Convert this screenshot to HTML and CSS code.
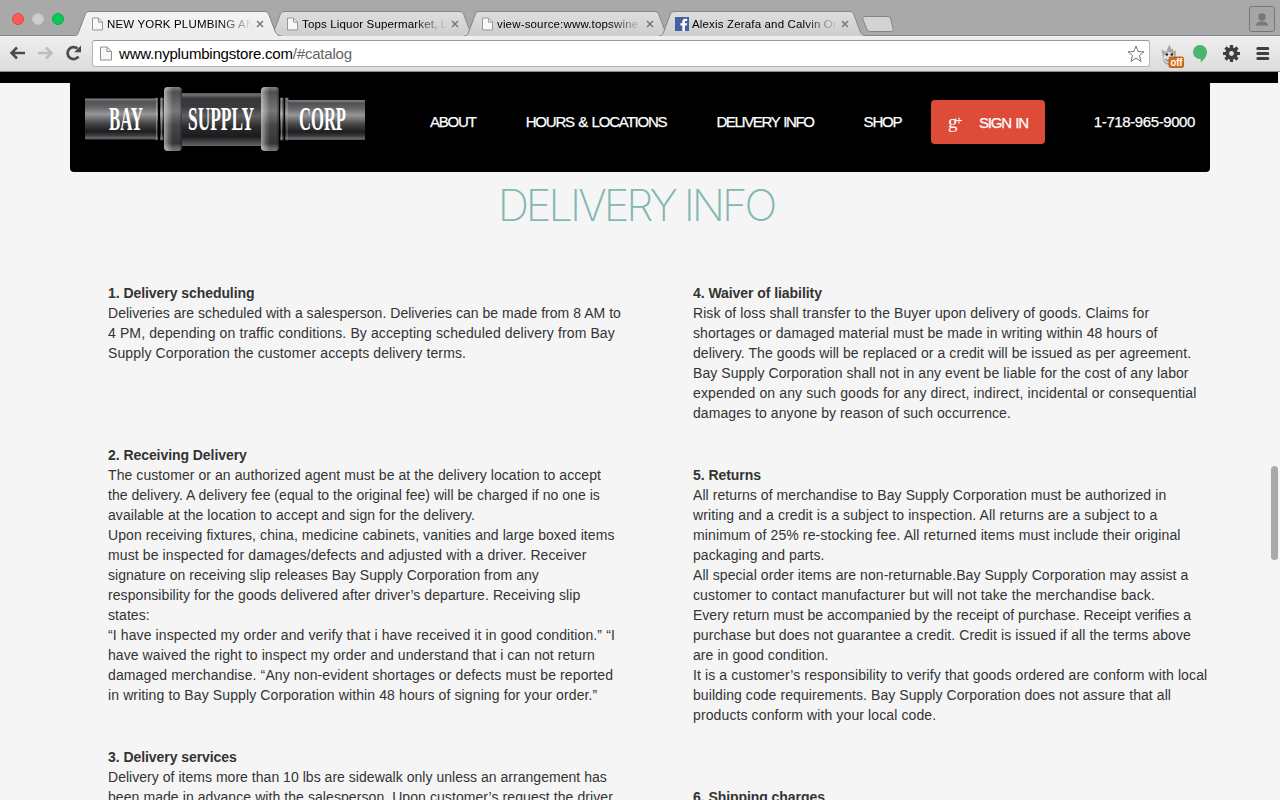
FILE: index.html
```html
<!DOCTYPE html>
<html lang="en">
<head>
<meta charset="utf-8">
<title>NEW YORK PLUMBING AND SUPPLY</title>
<link rel="stylesheet" href="styles.css">
</head>
<body>
<svg width="0" height="0" class="defs" aria-hidden="true">
  <defs>
    <linearGradient id="tabOn" x1="0" y1="0" x2="0" y2="1"><stop offset="0" stop-color="#f4f4f4"/><stop offset="1" stop-color="#ececec"/></linearGradient>
    <linearGradient id="tabOff" x1="0" y1="0" x2="0" y2="1"><stop offset="0" stop-color="#dedede"/><stop offset="1" stop-color="#cecece"/></linearGradient>
    <linearGradient id="pipe" x1="0" y1="0" x2="0" y2="1"><stop offset="0" stop-color="#858587"/><stop offset=".08" stop-color="#505052"/><stop offset=".22" stop-color="#666668"/><stop offset=".38" stop-color="#98989a"/><stop offset=".6" stop-color="#48484a"/><stop offset=".8" stop-color="#1d1d1f"/><stop offset=".9" stop-color="#3b3b3d"/><stop offset=".96" stop-color="#68686a"/><stop offset="1" stop-color="#4b4b4d"/></linearGradient>
    <linearGradient id="body" x1="0" y1="0" x2="0" y2="1"><stop offset="0" stop-color="#5c5c5e"/><stop offset=".04" stop-color="#6c6c6e"/><stop offset=".1" stop-color="#38383a"/><stop offset=".25" stop-color="#39393b"/><stop offset=".43" stop-color="#606062"/><stop offset=".65" stop-color="#29292b"/><stop offset=".82" stop-color="#1b1b1d"/><stop offset=".93" stop-color="#48484a"/><stop offset="1" stop-color="#68686a"/></linearGradient>
    <linearGradient id="ring" x1="0" y1="0" x2="0" y2="1"><stop offset="0" stop-color="#8f8f91"/><stop offset=".08" stop-color="#59595b"/><stop offset=".38" stop-color="#858587"/><stop offset=".6" stop-color="#4f4f51"/><stop offset=".88" stop-color="#3c3c3e"/><stop offset=".95" stop-color="#717173"/><stop offset="1" stop-color="#858587"/></linearGradient>
    <linearGradient id="shine" x1="0" y1="0" x2="1" y2="0"><stop offset="0" stop-color="#fff" stop-opacity=".5"/><stop offset=".3" stop-color="#fff" stop-opacity=".12"/><stop offset=".5" stop-color="#000" stop-opacity=".12"/><stop offset=".85" stop-color="#000" stop-opacity=".1"/><stop offset="1" stop-color="#000" stop-opacity=".5"/></linearGradient>
    <symbol id="page" viewBox="0 0 12 14"><path d="M.5.5h6.600l4.400 4.400v8.600H.5z" fill="#f7f7f7" stroke="#8e8e8e"/><path d="M7 .8V5h4.200" fill="none" stroke="#8e8e8e"/></symbol>
    <symbol id="close" viewBox="0 0 8 8"><path d="M1 1l6 6M7 1L1 7" stroke="#777" stroke-width="1.500"/></symbol>
    <symbol id="tab" viewBox="0 0 209 25"><path d="M0 25C4 24.500 4 22.500 5 20L11 4C12 1.500 13 .5 16 .5H190C193 .5 194 1.500 195 4L201 20C202 22.500 203 24.500 208 25" stroke="#858585"/></symbol>
  </defs>
</svg>

<header class="browser">
  <div class="tabstrip">
    <div class="lights"><i class="red"></i><i class="idle"></i><i class="green"></i></div>
    <div class="tabs">
      <div class="tab active"><svg class="shape"><use href="#tab"/></svg><svg class="favicon"><use href="#page"/></svg><span class="title">NEW YORK PLUMBING AN</span><svg class="close"><use href="#close"/></svg></div>
      <div class="tab"><svg class="shape"><use href="#tab"/></svg><svg class="favicon"><use href="#page"/></svg><span class="title">Tops Liquor Supermarket, L</span><svg class="close"><use href="#close"/></svg></div>
      <div class="tab"><svg class="shape"><use href="#tab"/></svg><svg class="favicon"><use href="#page"/></svg><span class="title">view-source:www.topswine</span><svg class="close"><use href="#close"/></svg></div>
      <div class="tab facebook"><svg class="shape"><use href="#tab"/></svg><svg class="favicon" viewBox="0 0 14 14"><path fill="#4460a0" d="M0 0h14v14H0z"/><path d="M7.300 14V8.500H5.400V6.200h1.900V4.700c0-2 1.100-3 3-3h1.900V4H11c-.9 0-1.100.4-1.100 1.100v1.100h2.200l-.3 2.300H9.900V14z" fill="#fff"/></svg><span class="title">Alexis Zerafa and Calvin Or</span><svg class="close"><use href="#close"/></svg></div>
    </div>
    <svg class="newtab" viewBox="0 0 32 16"><path d="M3 .5H25C27 .5 28 1.200 28.700 3L31 12.500C31.600 14.500 31 15.500 29 15.500H8.500C6.500 15.500 5.500 14.500 4.800 13L.8 3.200C.2 1.500 1 .5 3 .5Z" fill="#d3d3d3" stroke="#858585"/></svg>
    <svg class="profile" viewBox="0 0 26 26"><rect x=".5" y=".5" width="25" height="25" rx="2" fill="#a6a6a6" stroke="#767676"/><circle cx="13" cy="11" r="3.700" fill="#777"/><path d="M7 19.500c0-3 2.500-4 6-4s6 1 6 4z" fill="#777"/></svg>
  </div>
  <div class="toolbar">
    <svg class="nav-icons" viewBox="0 0 76 20"><path d="M18 10H4.500M10 4.500L4.500 10l5.500 5.500" fill="none" stroke="#4b4b4b" stroke-width="2.500"/><path d="M31 10h13.500M39 4.500l5.500 5.500-5.500 5.500" fill="none" stroke="#bdbdbd" stroke-width="2.500"/><path d="M71.500 13.500A6 6 0 1 1 70.500 5.500" fill="none" stroke="#4b4b4b" stroke-width="2.700"/><path d="M74 2.500v6.800h-6.800z" fill="#4b4b4b"/></svg>
    <div class="omnibox">
      <svg class="pageicon"><use href="#page"/></svg>
      <span class="url">www.nyplumbingstore.com<span class="path">/#catalog</span></span>
      <svg class="star" viewBox="0 0 18 18"><path d="M9 1l2.100 5.500 5.900.3-4.600 3.700 1.600 5.900L9 13.100 4 16.400l1.600-5.900L1 6.800l5.900-.3z" fill="#fff" stroke="#777" stroke-linejoin="round"/></svg>
    </div>
    <svg class="extensions" viewBox="0 0 114 26">
      <path d="M2 14L.5 5.500 5 8 8.500.5l2 5 1.500-1 .3 3L15 6.500 14.500 14c0 5-3 7-6 7s-6.500-2-6.500-7z" fill="#a5a5a5"/><ellipse cx="8" cy="13.500" rx="5.500" ry="5.500" fill="#ddd"/><circle cx="5.800" cy="10.500" r="1.300" fill="#222"/><circle cx="10.800" cy="10.500" r="1.300" fill="#222"/><path d="M4.500 15c1.500 2.500 5 2.500 7 0" fill="none" stroke="#555"/>
      <rect x="8" y="13" width="14.500" height="10.500" rx="1.500" fill="#d96b15" stroke="#a94c08" stroke-width=".7"/><text x="9.500" y="22" class="off" textLength="12" lengthAdjust="spacingAndGlyphs">off</text>
      <path d="M39 1a7 7 0 0 1 7 7c0 4.500-3 7.500-6.300 10.500V15H39a7 7 0 0 1 0-14z" fill="#49b66c"/>
      <g transform="translate(70.500 9.500)"><circle r="4.300" fill="none" stroke="#3f3f3f" stroke-width="3.800"/><path d="M0-8.500V-5M0 8.500V5M-8.500 0H-5M8.500 0H5M-6-6l2.500 2.500M6 6L3.500 3.500M-6 6l2.500-2.500M6-6L3.500-3.500" stroke="#3f3f3f" stroke-width="3.200"/></g>
      <path d="M96.800 4.500h10M96.800 9.500h10M96.800 14.500h10" stroke="#3f3f3f" stroke-width="3" stroke-linecap="round"/>
    </svg>
  </div>
</header>

<main class="site">
  <div class="blackstrip"></div>
  <nav class="navbar">
    <svg class="logo" viewBox="0 0 280 66">
      <rect y="12.500" width="71" height="41" fill="url(#pipe)"/><rect x="203" y="14" width="77" height="40" fill="url(#pipe)"/>
      <g fill="url(#pipe)"><rect x="70" y="11.500" width="3" height="43" rx="1.500"/><rect x="75" y="11.500" width="3.500" height="43" rx="1.500"/><rect x="195" y="11.500" width="3.500" height="43" rx="1.500"/><rect x="200" y="11.500" width="3.500" height="43" rx="1.500"/></g>
      <path d="M71.500 13v40M76.500 13v40M196.500 13v40M202 13v40" stroke="#ccc" stroke-opacity=".45"/>
      <rect x="96" y="7" width="81" height="53" fill="url(#body)"/>
      <g fill="url(#ring)"><rect x="79" y="1" width="18" height="64" rx="4"/><rect x="176" y="1" width="18" height="64" rx="4"/></g>
      <g fill="url(#shine)"><rect x="79" y="1" width="18" height="64" rx="4"/><rect x="176" y="1" width="18" height="64" rx="4"/></g>
      <g class="logotext"><text x="24" y="43.500" textLength="34" lengthAdjust="spacingAndGlyphs">BAY</text><text x="103" y="43.500" textLength="66" lengthAdjust="spacingAndGlyphs">SUPPLY</text><text x="214" y="43.500" textLength="47" lengthAdjust="spacingAndGlyphs">CORP</text></g>
    </svg>
    <div class="links"><a>ABOUT</a><a>HOURS &amp; LOCATIONS</a><a class="delivery">DELIVERY INFO</a><a>SHOP</a></div>
    <a class="signin"><svg class="gplus" viewBox="0 0 14 16"><text x="0" y="11" class="g">g</text><path d="M11 .5v6M8 3.500h6" stroke="#fff" stroke-width="1"/></svg><span>SIGN IN</span></a>
    <span class="phone">1-718-965-9000</span>
  </nav>
  <h1>DELIVERY INFO</h1>
  <div class="columns">
    <div class="col left">
      <section class="s1"><h2>1. Delivery scheduling</h2>
        <p><span class="snug">Deliveries are scheduled with a salesperson. Deliveries can be made from 8 AM to</span><br><span class="loose">4 PM, depending on traffic conditions. By accepting scheduled delivery from Bay<br>Supply Corporation the customer accepts delivery terms.</span></p></section>
      <section class="s2"><h2>2. Receiving Delivery</h2>
        <p>The customer or an authorized agent must be at the delivery location to accept<br><span class="snug">the delivery. A delivery fee (equal to the original fee) will be charged if no one is</span><br>available at the location to accept and sign for the delivery.<br>Upon receiving fixtures, china, medicine cabinets, vanities and large boxed items<br><span class="loose">must be inspected for damages/defects and adjusted with a driver. Receiver</span><br><span class="snug">signature on receiving slip releases Bay Supply Corporation from any</span><br>responsibility for the goods delivered after driver’s departure. Receiving slip<br>states:<br><span class="loose">“I have inspected my order and verify that i have received it in good condition.” “I</span><br>have waived the right to inspect my order and understand that i can not return<br><span class="loose">damaged merchandise. “Any non-evident shortages or defects must be reported<br>in writing to Bay Supply Corporation within 48 hours of signing for your order.”</span></p></section>
      <section><h2>3. Delivery services</h2>
        <p><span class="snug">Delivery of items more than 10 lbs are sidewalk only unless an arrangement has</span><br>been made in advance with the salesperson. Upon customer’s request the driver</p></section>
    </div>
    <div class="col right">
      <section class="s4"><h2>4. Waiver of liability</h2>
        <p>Risk of loss shall transfer to the Buyer upon delivery of goods. Claims for<br>shortages or damaged material must be made in writing within 48 hours of<br>delivery. The goods will be replaced or a credit will be issued as per agreement.<br>Bay Supply Corporation shall not in any event be liable for the cost of any labor<br><span class="loose">expended on any such goods for any direct, indirect, incidental or consequential</span><br>damages to anyone by reason of such occurrence.</p></section>
      <section class="s5"><h2>5. Returns</h2>
        <p>All returns of merchandise to Bay Supply Corporation must be authorized in<br><span class="loose">writing and a credit is a subject to inspection. All returns are a subject to a<br>minimum of 25% re-stocking fee. All returned items must include their original</span><br>packaging and parts.<br>All special order items are non-returnable.Bay Supply Corporation may assist a<br><span class="loose">customer to contact manufacturer but will not take the merchandise back.</span><br><span class="tight">Every return must be accompanied by the receipt of purchase. Receipt verifies a</span><br>purchase but does not guarantee a credit. Credit is issued if all the terms above<br>are in good condition.<br><span class="loose">It is a customer’s responsibility to verify that goods ordered are conform with local</span><br>building code requirements. Bay Supply Corporation does not assure that all<br><span class="loose">products conform with your local code.</span></p></section>
      <section><h2>6. Shipping charges</h2></section>
    </div>
  </div>
  <div class="scrollthumb"></div>
</main>
</body>
</html>
```
FILE: styles.css
```css
* { box-sizing: border-box; }
body { margin: 0; width: 1280px; height: 800px; overflow: hidden; background: #f5f5f5; color: #333; font-family: "Liberation Sans", Arial, sans-serif; display: flex; flex-direction: column; }
svg { display: block; flex: none; }
.defs { position: absolute; }

.browser { flex: none; height: 72px; }
.tabstrip { height: 36px; background: #a9a9a9; display: flex; border-bottom: 1px solid #858585; }
.lights { width: 75px; padding: 13px 0 0 12px; display: flex; gap: 8px; flex: none; }
.lights i { width: 12px; height: 12px; border-radius: 50%; }
.red { background: #fc5b57; border: 1px solid #e2463f; }
.idle { background: #cecece; border: 1px solid #c2c2c2; }
.green { background: #06cb55; border: 1px solid #13a94a; }
.tabs { display: flex; height: 36px; padding-top: 11px; flex: none; }
.tab { position: relative; width: 195px; height: 25px; padding: 0 6px 0 17px; display: flex; align-items: center; z-index: 1; }
.tab.active { z-index: 2; }
.tab .shape { position: absolute; left: -1px; top: 0; width: 209px; height: 25px; fill: url(#tabOff); z-index: -1; }
.tab.active .shape { fill: url(#tabOn); }
.favicon { width: 11px; height: 14px; margin-right: 4px; }
.facebook .favicon { width: 14px; margin: 0 3px 0 -2px; }
.title { width: 148px; margin-right: 1px; font-size: 11.500px; line-height: 16px; letter-spacing: .16px; color: #000; white-space: nowrap; -webkit-mask-image: linear-gradient(90deg, #000 112px, transparent 146px); mask-image: linear-gradient(90deg, #000 112px, transparent 146px); }
.close { width: 8px; height: 8px; }
.newtab { width: 32px; height: 16px; margin: 16px 0 0 7px; }
.profile { width: 26px; height: 26px; margin: 6px 5px 0 auto; }

.toolbar { height: 36px; background: linear-gradient(#efefef, #dcdcdc); border-bottom: 1px solid #8c8c8c; display: flex; padding-top: 4px; }
.nav-icons { width: 76px; height: 20px; margin: 3px 9px 0 7px; }
.omnibox { width: 1058px; height: 27px; background: #fff; border: 1px solid #b5b5b5; border-top-color: #999; border-radius: 3px; display: flex; align-items: center; padding: 0 4px 0 7px; flex: none; }
.pageicon { width: 12px; height: 15px; margin-right: 7px; }
.url { font-size: 15px; letter-spacing: -.2px; color: #000; flex: 1; }
.path { color: #666; }
.star { width: 18px; height: 18px; }
.extensions { width: 114px; height: 26px; margin: 4px 0 0 11px; }
.off { font: bold 10.500px "Liberation Sans", sans-serif; fill: #fff; }

.site { flex: 1; position: relative; }
.blackstrip { width: 1278px; height: 11px; background: #000; }
.navbar { width: 1140px; height: 89px; margin-left: 70px; background: #000; border-radius: 0 0 4px 4px; display: flex; padding: 3px 15px 0; color: #fff; font-size: 15px; line-height: 20px; letter-spacing: -1.200px; word-spacing: 1.500px; white-space: nowrap; -webkit-text-stroke: .25px #fff; }
.logo { width: 280px; height: 66px; }
.logotext { font: bold 33px "Liberation Serif", serif; letter-spacing: 0; fill: #fff; -webkit-text-stroke: 0; }
.links { display: flex; gap: 50px; margin-left: 65px; padding-top: 26px; width: 501px; flex: none; }
.delivery { letter-spacing: -1.380px; }
.signin { width: 114px; height: 44px; margin-top: 14px; background: #dd4b39; border-radius: 4px; display: flex; align-items: center; padding: 2px 0 0 17px; gap: 17px; flex: none; letter-spacing: -1.200px; }
.gplus { width: 14px; height: 16px; margin-top: 4px; overflow: visible; }
.g { font: 19px "Liberation Serif", serif; letter-spacing: 0; fill: #fff; -webkit-text-stroke: 0; }
.phone { margin-left: auto; padding-top: 26px; letter-spacing: -.4px; }
h1 { margin: 7px 8px 0 0; height: 52px; text-align: center; font: 200 43.500px/52px Inter, sans-serif; letter-spacing: -3px; word-spacing: -.5px; color: #83b7b3; }
.columns { display: flex; margin: 52px 0 0 108px; font-size: 14px; line-height: 20px; letter-spacing: .075px; white-space: nowrap; }
.tight { letter-spacing: .01px; }
.snug { letter-spacing: .03px; }
.loose { letter-spacing: .115px; }
.left { width: 585px; }
h2 { margin: 0; font-size: 14px; line-height: 20px; letter-spacing: -.06px; }
p { margin: 0; }
.s1 { height: 162px; }
.s2 { height: 302px; }
.s4 { height: 182px; }
.s5 { height: 322px; }
.scrollthumb { position: absolute; left: 1271px; top: 394px; width: 7px; height: 94px; border-radius: 4px; background: #a9a9a9; }
```
